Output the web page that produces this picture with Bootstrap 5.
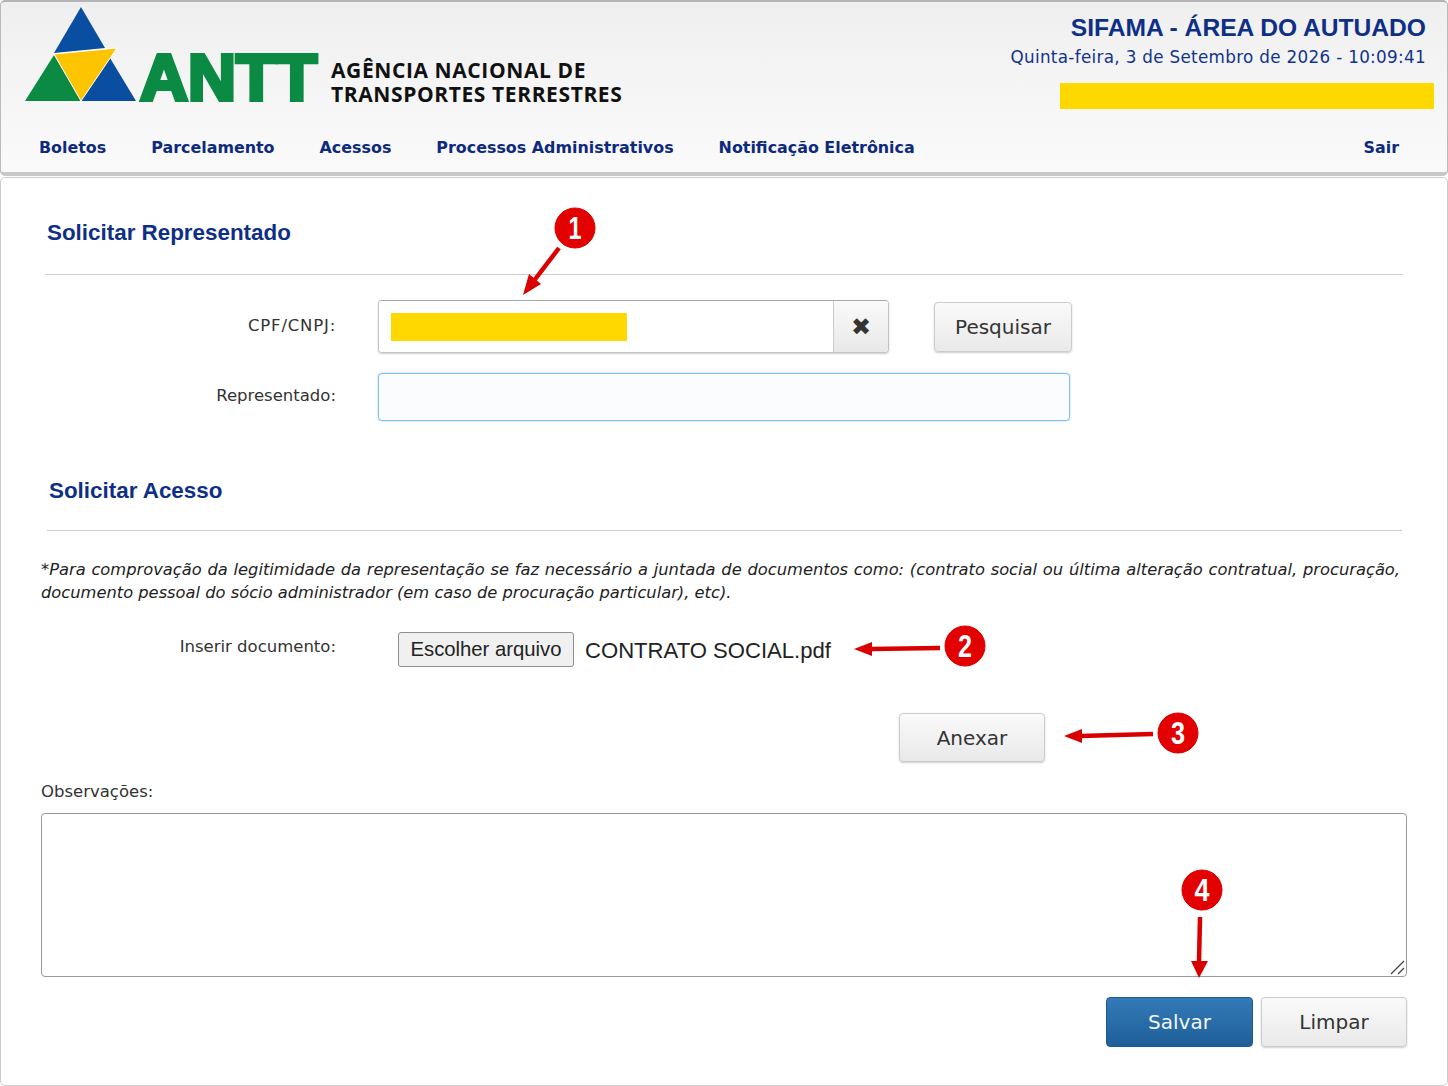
<!DOCTYPE html>
<html lang="pt-BR">
<head>
  <meta charset="UTF-8" />
  <meta name="viewport" content="width=device-width, initial-scale=1" />
  <title>SIFAMA - Área do Autuado</title>
  <link href="https://cdn.jsdelivr.net/npm/bootstrap@5.3.0/dist/css/bootstrap.min.css" rel="stylesheet" />
  <style>
    body {
      background: #fff;
      font-family: "DejaVu Sans", sans-serif;
      color: #222;
      width: 1448px;
      height: 1086px;
      overflow: hidden;
      position: relative;
    }

    .topo {
      height: 176px;
      background: linear-gradient(#efefef 0%, #f5f5f5 50%, #fafafa 100%);
      border: 1px solid #bbb;
      border-top: 2px solid #b5b5b5;
      border-bottom: 4px solid #c8c8c8;
      border-radius: 5px;
    }

    .logo { display: block; margin: 2px -4px -8px 20px; overflow: visible; }
    .logo text { font-family: "Liberation Sans", sans-serif; font-weight: 700; font-size: 64px; fill: #0b8a43; stroke: #0b8a43; stroke-width: 4px; }

    .orgao {
      font-family: "Open Sans", sans-serif;
      font-weight: 700;
      font-size: 21px;
      line-height: 24px;
      color: #111;
      margin-top: 56px;
      margin-left: 10px;
      letter-spacing: .6px;
    }

    .cabeca-dir { padding: 8px 21px 0 0; }

    .titulo-sistema {
      font-family: "Liberation Sans", sans-serif;
      font-weight: 700;
      font-size: 24.6px;
      line-height: 30px;
      color: #0e2f86;
      margin-top: 3px;
    }

    .data-hora { font-size: 16.8px; line-height: 22px; color: #12338c; margin-top: 3px; letter-spacing: .31px; }

    .tarja { width: 374px; height: 26px; background: #ffd800; margin-top: 15px; margin-right: -8px; }

    .menu { padding: 0 48px 0 38px; margin-top: 28px; }
    .menu-itens { gap: 45px; }
    .menu a {
      font-size: 15.9px;
      font-weight: 700;
      color: #0e2a7d;
      text-decoration: none;
      line-height: 22px;
    }

    .miolo {
      height: 909px;
      margin-top: 1px;
      border: 1px solid #ccc;
      border-radius: 5px;
      padding: 0 40px;
    }

    .secao {
      font-family: "Liberation Sans", sans-serif;
      font-weight: 700;
      font-size: 22.4px;
      line-height: 28px;
      color: #0e2f86;
      margin: 0;
    }

    .secao-rep { padding: 41px 0 0 6px; }
    .secao-acesso { margin: 56px 0 0 8px; }

    .linha { border: 0; border-top: 1px solid #ccc; opacity: 1; margin: 0; }
    .linha-rep { margin: 27px 4px 0 4px; }
    .linha-acesso { margin: 25px 5px 0 6px; }

    .rotulo { width: 295px; text-align: right; font-size: 16.5px; line-height: 22px; color: #333; flex: none; margin: 0; }
    .rotulo-cpf { padding-top: 15px; letter-spacing: .8px; }
    .rotulo-rep { padding-top: 12px; }
    .rotulo-doc { padding-top: 4px; }

    .linha-cpf { margin-top: 25px; }
    .linha-repres { margin-top: 20px; }

    .campo-cpf { width: 511px; height: 53px; margin-left: 42px; border-radius: 4px; border: 1px solid #c4c4c4; border-top-color: #aaa; box-shadow: 0 1px 2px rgba(0,0,0,.2); overflow: hidden; flex: none; }
    .campo-cpf .miolo-campo { flex: 1; display: flex; align-items: center; padding-left: 12px; background: #fff; }
    .tarja-cpf { width: 236px; height: 28px; background: #ffd800; }
    .limpa { width: 55px; border: 0; border-left: 1px solid #ccc; padding: 0; font-size: 24px; line-height: 1; color: #333; background: linear-gradient(#fafafa, #e8e8e8); }

    .btn-cinza {
      font-size: 20px;
      color: #333;
      background: linear-gradient(#fafafa, #e9e9e9);
      border: 1px solid #ccc;
      border-radius: 4px;
      box-shadow: 0 1px 2px rgba(0,0,0,.2);
      padding: 0;
    }

    .btn-pesquisar { width: 138px; height: 50px; margin-left: 45px; margin-top: 2px; }

    .campo-rep {
      width: 692px;
      height: 48px;
      margin-left: 42px;
      background: #fafcfe;
      border: 1px solid #7fbdf0;
      border-radius: 4px;
      box-shadow: 0 0 2px rgba(90,170,240,.6);
    }

    .aviso {
      font-style: italic;
      font-size: 16.3px;
      line-height: 22.5px;
      color: #222;
      text-align: justify;
      margin: 28px 7px 0 0;
    }

    .linha-doc { margin-top: 28px; }

    .btn-arquivo {
      font-family: "Liberation Sans", sans-serif;
      font-size: 20.3px;
      width: 176px;
      height: 35px;
      margin-left: 62px;
      color: #222;
      background: #f0f0f0;
      border: 1px solid #8f8f8f;
      border-radius: 3px;
      padding: 0;
    }

    .nome-arquivo { font-family: "Liberation Sans", sans-serif; font-size: 22.1px; color: #222; margin-left: 11px; padding-top: 5px; line-height: 28px; }

    .linha-anexar { margin: 46px 0 0 858px; }
    .btn-anexar { width: 146px; height: 49px; }

    .rotulo-obs { font-size: 16.5px; line-height: 22px; margin-top: 19px; color: #333; }
    .obs { height: 164px; width: 1366px; margin-top: 10px; border: 1px solid #999; border-radius: 4px; resize: none; }

    .acoes { margin-top: 20px; width: 1366px; }

    .btn-salvar {
      width: 147px;
      height: 50px;
      font-size: 20px;
      color: #f2f6fa;
      background: linear-gradient(#337ab7, #1f5f99);
      border: 1px solid #1d5a92;
      border-radius: 4px;
      padding: 0;
    }

    .btn-limpar { width: 146px; height: 50px; }

    .anotacoes { position: absolute; top: 0; left: 0; pointer-events: none; }
    .anotacoes text { font-family: "Liberation Sans", sans-serif; font-weight: 700; font-size: 32px; fill: #fff; text-anchor: middle; }
    .grip { stroke: #444; stroke-width: 1.3; }
  </style>
</head>
<body>

  <header class="topo">
    <div class="d-flex justify-content-between">
      <div class="d-flex">
        <svg class="logo" width="304" height="112" viewBox="0 0 304 112" role="img" aria-label="ANTT">
          <polygon points="60,3 84,44 33,49" fill="#0a4ea2" />
          <polygon points="33,51 60,97 4,97" fill="#0b8a43" />
          <polygon points="89,54 115,97 60,97" fill="#0a4ea2" />
          <polygon points="33,50 96,44 60,97" fill="#fdc400" stroke="#fff" stroke-width="1" />
          <text x="119" y="95.5" textLength="177" lengthAdjust="spacingAndGlyphs">ANTT</text>
        </svg>
        <div class="orgao">AGÊNCIA NACIONAL DE<br />TRANSPORTES TERRESTRES</div>
      </div>
      <div class="cabeca-dir text-end">
        <div class="titulo-sistema">SIFAMA - ÁREA DO AUTUADO</div>
        <div class="data-hora">Quinta-feira, 3 de Setembro de 2026 - 10:09:41</div>
        <div class="tarja ms-auto"></div>
      </div>
    </div>
    <nav class="menu d-flex">
      <div class="menu-itens d-flex">
        <a href="#">Boletos</a>
        <a href="#">Parcelamento</a>
        <a href="#">Acessos</a>
        <a href="#">Processos Administrativos</a>
        <a href="#">Notificação Eletrônica</a>
      </div>
      <a href="#" class="ms-auto">Sair</a>
    </nav>
  </header>

  <main class="miolo">
    <section>
      <h2 class="secao secao-rep">Solicitar Representado</h2>
      <hr class="linha linha-rep" />
      <div class="linha-cpf d-flex">
        <label class="rotulo rotulo-cpf">CPF/CNPJ:</label>
        <div class="campo-cpf d-flex">
          <div class="miolo-campo"><div class="tarja-cpf"></div></div>
          <button class="limpa" type="button">✖</button>
        </div>
        <button class="btn btn-cinza btn-pesquisar" type="button">Pesquisar</button>
      </div>
      <div class="linha-repres d-flex">
        <label class="rotulo rotulo-rep">Representado:</label>
        <div class="campo-rep"></div>
      </div>
    </section>

    <section>
      <h2 class="secao secao-acesso">Solicitar Acesso</h2>
      <hr class="linha linha-acesso" />
      <p class="aviso">*Para comprovação da legitimidade da representação se faz necessário a juntada de documentos como: (contrato social ou última alteração contratual, procuração, documento pessoal do sócio administrador (em caso de procuração particular), etc).</p>
      <div class="linha-doc d-flex">
        <label class="rotulo rotulo-doc">Inserir documento:</label>
        <button class="btn btn-arquivo" type="button">Escolher arquivo</button>
        <span class="nome-arquivo">CONTRATO SOCIAL.pdf</span>
      </div>
      <div class="linha-anexar d-flex">
        <button class="btn btn-cinza btn-anexar" type="button">Anexar</button>
      </div>
      <div class="rotulo-obs">Observações:</div>
      <textarea class="obs d-block form-control" aria-label="Observações"></textarea>
      <div class="acoes d-flex justify-content-end gap-2">
        <button class="btn btn-salvar" type="button">Salvar</button>
        <button class="btn btn-cinza btn-limpar" type="button">Limpar</button>
      </div>
    </section>
  </main>

  <svg class="anotacoes" width="1448" height="1086" viewBox="0 0 1448 1086">
    <line class="grip" x1="1391" y1="974" x2="1404" y2="961" />
    <line class="grip" x1="1398" y1="974" x2="1404" y2="968" />
    <g fill="#e30000" stroke="#d90000">
      <circle cx="575" cy="228" r="20" />
      <circle cx="965" cy="646" r="20" />
      <circle cx="1178" cy="733" r="20" />
      <circle cx="1202" cy="890" r="20" />
    </g>
    <g stroke="#d90000" stroke-width="4.5" fill="none">
      <line x1="559" y1="248" x2="533" y2="282" />
      <line x1="940" y1="648" x2="870" y2="649" />
      <line x1="1153" y1="734" x2="1080" y2="736" />
      <line x1="1200" y1="917" x2="1199" y2="962" />
    </g>
    <g fill="#d90000">
      <polygon points="523,295 529,274 541,284" />
      <polygon points="854,649 872,642 872,656" />
      <polygon points="1064,736 1082,729 1082,743" />
      <polygon points="1199,978 1191,961 1208,961" />
    </g>
    <text x="575" y="239" textLength="13" lengthAdjust="spacingAndGlyphs">1</text>
    <text x="965" y="657" textLength="14" lengthAdjust="spacingAndGlyphs">2</text>
    <text x="1178" y="744" textLength="14" lengthAdjust="spacingAndGlyphs">3</text>
    <text x="1202" y="901" textLength="15" lengthAdjust="spacingAndGlyphs">4</text>
  </svg>

  <script src="https://cdn.jsdelivr.net/npm/bootstrap@5.3.0/dist/js/bootstrap.bundle.min.js"></script>
</body>
</html>
